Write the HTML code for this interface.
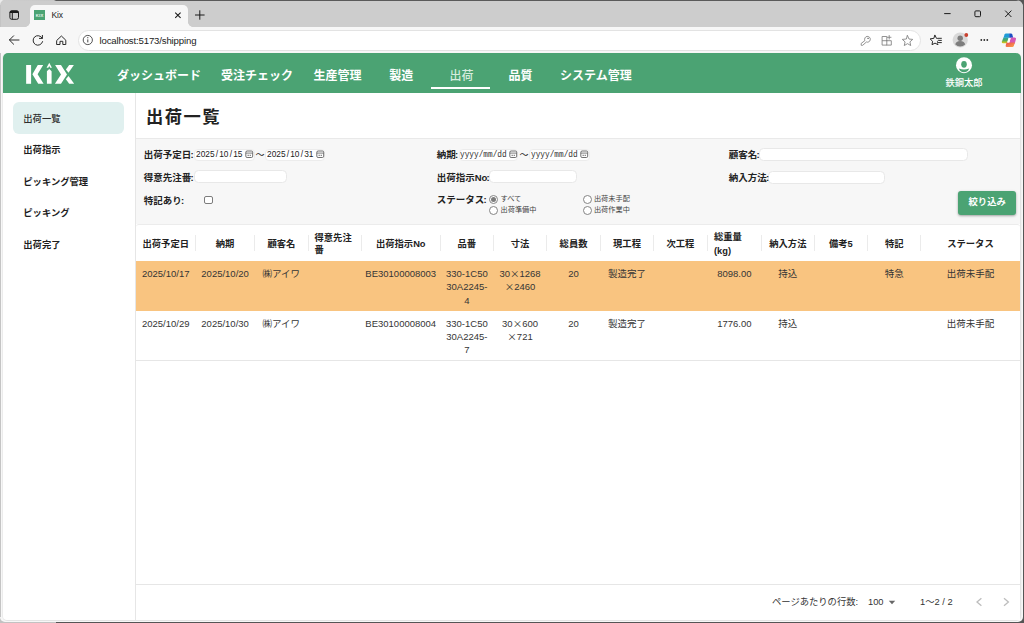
<!DOCTYPE html>
<html lang="ja">
<head>
<meta charset="utf-8">
<title>Kix</title>
<style>
*{box-sizing:border-box;margin:0;padding:0}
html,body{width:1024px;height:623px;overflow:hidden;background:#555}
body{font-family:"Liberation Sans","Noto Sans CJK JP",sans-serif;color:#222;position:relative}
.abs{position:absolute}
#win{position:absolute;left:0;top:0;width:1023px;height:621.600px;background:#f7f7f7;border-radius:5px 7px 5px 5px;overflow:hidden}
#tabbar{position:absolute;left:0;top:0;width:1023px;height:27px;background:#cdcdcd}
#tab{position:absolute;left:30px;top:5px;width:158px;height:22px;background:#f7f7f7;border-radius:5px 5px 0 0}
#topline{position:absolute;left:0;top:0;width:1023px;height:.9px;background:linear-gradient(90deg,#cdcdcd 0,#c8c8c8 54px,#5a5a5a 56px)}
#leftline{position:absolute;left:0;top:5px;width:.9px;height:612px;background:#c4c4c4}
#toolbar{position:absolute;left:0;top:27px;width:1023px;height:26px;background:#f7f7f7}
#url{position:absolute;left:78px;top:30px;width:842.5px;height:21px;border-radius:11px;background:#fff;border:1px solid #e3e3e3}
.chrome-t{font-family:"Liberation Sans",sans-serif;color:#222}
#content{position:absolute;left:2.200px;top:53px;width:1019.300px;height:567.500px;background:#fff;border-radius:5px;border:1px solid #e4e4e4;box-shadow:1px 0 0 #f1f1f1;border-left:1.800px solid #ececec;border-top:none}
#hdr{position:absolute;left:3.400px;top:53.400px;width:1017.600px;height:39.300px;background:#4ba373;border-radius:5px 5px 0 0}
.nav{position:absolute;top:68px;color:#fff;font-weight:700;font-size:12px;line-height:17px;white-space:nowrap}
.sitem{position:absolute;left:23.300px;font-size:9.300px;font-weight:700;color:#222;line-height:14px;white-space:nowrap}
#sel{position:absolute;left:12.800px;top:102.100px;width:111.400px;height:31.700px;border-radius:6px;background:#e0f0ef}
h1{position:absolute;left:145.900px;top:103.500px;font-size:17.300px;letter-spacing:1.500px;line-height:27px;font-weight:700;color:#222;white-space:nowrap}
#filter{position:absolute;left:136px;top:138px;width:884px;height:85.500px;background:#f7f7f7;border-top:1px solid #e9e9e9}
.fl{z-index:2;position:absolute;font-size:9.500px;font-weight:700;line-height:14px;color:#222;white-space:nowrap}
.fl i{font-style:normal;margin:0 -1px 0 -.8px}
.inp{position:absolute;background:#fff;border:1.200px solid #e8e8e8;border-radius:4.500px}
.dinp{position:absolute;background:#fff;border:1px solid #ececec;border-radius:4px;white-space:nowrap}
.dt{position:absolute;left:.4px;top:-1.700px;font-family:"Liberation Sans","Noto Sans CJK JP",sans-serif;font-size:9.800px;line-height:11.800px;transform:scaleX(.85);transform-origin:0 50%;display:block}
.dt b{font-weight:400;margin:0 1.400px}
.dm{position:absolute;left:.4px;top:-.7px;font-family:"Liberation Mono","Noto Sans CJK JP",monospace;font-size:9.600px;line-height:11.600px;transform:scaleX(.81);transform-origin:0 50%;display:block}
.cal{position:absolute;right:-.2px;top:-.2px;overflow:visible}
.til{top:148px;font-size:9px;line-height:14px;color:#222}
.rl{position:absolute;font-size:7.200px;line-height:10px;color:#444;white-space:nowrap}
.rad{position:absolute;width:9px;height:9px;border:.9px solid #858585;margin:-.4px 0 0 -.4px;border-radius:50%;background:#fff}
.rad i{position:absolute;left:1.100px;top:1.100px;width:5px;height:5px;border-radius:50%;background:#7c7c7c}
#btn{position:absolute;left:958px;top:191px;width:58.300px;height:23.700px;border-radius:3px;background:#4ba373;color:#fff;font-weight:700;font-size:9.300px;line-height:23.700px;text-align:center;box-shadow:0 1px 2.500px rgba(0,0,0,.35)}
#tbl{position:absolute;left:136px;top:223.500px;width:884px;height:396px;background:#fff;border-top:1px solid #ececec;border-radius:3px 3px 0 0}
.th{position:absolute;font-size:9.300px;font-weight:700;line-height:12px;color:#222;white-space:nowrap}
.c{text-align:center}
.sep{position:absolute;top:235.200px;width:1px;height:15.600px;background:#ebebeb}
.td{position:absolute;font-size:9.500px;line-height:13.200px;color:#353535;white-space:nowrap}
.x{font-family:"Noto Sans CJK JP",sans-serif}
.hl{position:absolute;left:136px;width:884px;height:1px;background:#e6e6e6}
.ft{position:absolute;top:595px;font-size:9.300px;line-height:14px;color:#333;white-space:nowrap}
</style>
</head>
<body>
<div class="abs" style="left:0;top:0;width:12px;height:623px;background:#c6c6c6"></div>
<div class="abs" style="left:0;top:0;width:8px;height:8px;background:#ececec"></div>
<div class="abs" style="left:0;top:612px;width:56px;height:11px;background:#c2c2c2"></div>
<div id="win">
  <div id="tabbar"></div>
  <div id="topline"></div>
  <div id="leftline"></div>
  <div id="tab"></div>
  <div class="abs" style="left:25px;top:22px;width:5px;height:5px;background:radial-gradient(circle at 0 0,#cdcdcd 4.6px,#f7f7f7 5.2px)"></div>
  <div class="abs" style="left:188px;top:22px;width:5px;height:5px;background:radial-gradient(circle at 100% 0,#cdcdcd 4.6px,#f7f7f7 5.2px)"></div>
  <svg class="abs" style="left:8px;top:9px" width="12" height="12" viewBox="0 0 12 12"><rect x="1.9" y="1.9" width="8.6" height="8.4" rx="1.8" fill="none" stroke="#1b1b1b" stroke-width="1"/><path d="M1.6 3.9V3.6a2 2 0 0 1 2-2h5.2a2 2 0 0 1 2 2v.3z" fill="#1b1b1b"/><path d="M4.3 3.5v6.8" stroke="#1b1b1b" stroke-width="1"/></svg>
  <svg class="abs" style="left:34px;top:10px" width="11" height="10" viewBox="0 0 11 10"><rect width="11" height="10" fill="#4ba373"/><text x="5.600" y="6.600" text-anchor="middle" font-family="Liberation Sans, sans-serif" font-weight="700" font-size="4.200" fill="#e8f5ee" letter-spacing=".2">KIX</text></svg>
  <div class="abs chrome-t" style="left:51.5px;top:9px;font-size:8.5px;line-height:12px;letter-spacing:-.2px">Kix</div>
  <svg class="abs" style="left:174px;top:11px" width="8" height="8" viewBox="0 0 8 8"><path d="M1.2 1.6l5.4 5.2M6.6 1.6L1.2 6.8" stroke="#1b1b1b" stroke-width="1.1" fill="none"/></svg>
  <svg class="abs" style="left:194px;top:9px" width="12" height="12" viewBox="0 0 12 12"><path d="M1 6h9.6M5.8 1.3v9.4" stroke="#1b1b1b" stroke-width="1" fill="none"/></svg>
  <svg class="abs" style="left:940px;top:8px" width="76" height="12" viewBox="0 0 76 12"><path d="M4.2 5.6h6.4" stroke="#1b1b1b" stroke-width="1"/><rect x="34.9" y="2.9" width="5.6" height="5.8" rx="1" fill="none" stroke="#1b1b1b" stroke-width="1"/><path d="M65.2 2.6l6.2 6.4M71.4 2.6l-6.2 6.4" stroke="#1b1b1b" stroke-width="1" fill="none"/></svg>
  <div id="toolbar"></div>
  <div id="url"></div>
  <svg class="abs" style="left:7px;top:33px" width="64" height="14" viewBox="0 0 64 14"><g fill="none" stroke="#2a2a2a" stroke-width="1" stroke-linecap="round" stroke-linejoin="round"><path d="M12 7H2.6M6.6 2.8L2.4 7l4.2 4.2"/><path d="M35.2 5.2A4.8 4.8 0 1 0 35.6 8.6M35.4 2.4v3h-3"/><path d="M50 7.2L54.4 3l4.4 4.2v4.3h-3V8.300h-2.800v3.2h-3z"/></g></svg>
  <svg class="abs" style="left:82px;top:34px" width="12" height="12" viewBox="0 0 12 12"><circle cx="5.8" cy="6" r="4.6" fill="none" stroke="#444" stroke-width=".9"/><path d="M5.800 5.400v3" stroke="#444" stroke-width="1"/><circle cx="5.800" cy="3.700" r=".6" fill="#444"/></svg>
  <div class="abs chrome-t" style="left:99.500px;top:33.500px;font-size:9.6px;line-height:13px;letter-spacing:-.15px;white-space:nowrap">localhost:5173/shipping</div>
  <svg class="abs" style="left:858px;top:32.800px" width="60" height="14" viewBox="0 0 60 14"><g fill="none" stroke="#808080" stroke-width=".85" stroke-linejoin="round" stroke-linecap="round"><path d="M6.700 7.300a2.900 2.900 0 1 1 1.700 1.700L4.700 12.300H3.200V10.800z"/><circle cx="10" cy="5.300" r=".4"/><path d="M24.500 3.500h4.300v8.600h-4.300zM28.800 7.700h4.500v4.400h-4.500M31.200 2.500v3.600M29.400 4.300h3.600M24.500 7.700h4.300"/><path d="M49.500 2.600L51 6.040L54.730 6.400L51.930 8.890L52.730 12.550L49.500 10.650L46.270 12.550L47.070 8.890L44.270 6.400L48 6.040z"/></g></svg>
  <svg class="abs" style="left:928px;top:32px" width="92" height="16" viewBox="0 0 92 16"><g fill="none" stroke="#2a2a2a" stroke-width="1" stroke-linejoin="round" stroke-linecap="round"><path d="M7 3.300l1.500 3.100 3.400.5-2.500 2.400.6 3.400-3-1.600-3 1.600.6-3.400-2.500-2.400 3.400-.5z"/><path d="M9.600 6.300h4M10.600 8.400h3M9.800 10.600h3.800" stroke="#f7f7f7" stroke-width="2.600" stroke-linecap="butt"/><path d="M9.800 6.300h3.600M10.800 8.400h2.600M10.200 10.600h3.200"/></g><circle cx="32.200" cy="8" r="7.600" fill="#d9d9d9"/><circle cx="32.200" cy="6.300" r="2.700" fill="#7d7d7d"/><path d="M27.300 12.600a4.900 3.600 0 0 1 9.800 0 7 7 0 0 1-9.800 0z" fill="#7d7d7d"/><circle cx="38.300" cy="3" r="1.900" fill="#c8402f"/><circle cx="53.300" cy="8" r=".9" fill="#2a2a2a"/><circle cx="56.300" cy="8" r=".9" fill="#2a2a2a"/><circle cx="59.300" cy="8" r=".9" fill="#2a2a2a"/></svg>
  <svg class="abs" style="left:1000px;top:32px" width="18" height="16" viewBox="1000 32 18 16"><defs><linearGradient id="cg1" x1="0" y1="0" x2="0" y2="1"><stop offset="0" stop-color="#2aa3a8"/><stop offset=".5" stop-color="#52aa5c"/><stop offset="1" stop-color="#e6c914"/></linearGradient><linearGradient id="cg2" x1="0" y1="0" x2="1" y2="1"><stop offset="0" stop-color="#ee4b50"/><stop offset="1" stop-color="#f8a548"/></linearGradient></defs><path d="M1003.500 37.700L1004.500 34.600Q1004.900 33.600 1006 33.600H1009.200V37.700Z" fill="#1f9bd8"/><path d="M1009.200 33.600H1011Q1012 33.600 1012.300 34.600L1013.200 37.700H1009.200Z" fill="#1d4fc4"/><path d="M1003.500 37.600H1008.600L1006.900 43.200H1003.200Q1001.500 43.200 1001.800 41.700Z" fill="url(#cg1)"/><path d="M1010.800 37.600H1014.600Q1016.400 37.600 1016 39.100L1014.700 43.800H1009.200Z" fill="#d457b5"/><path d="M1006.600 42.600H1014.900L1013.800 46.100Q1013.400 47.100 1012.300 47.100H1007Q1005.300 47.100 1005.700 45.600Z" fill="url(#cg2)"/><path d="M1008.700 38.200H1010.600L1009.200 42.600H1007.300Z" fill="#fff"/></svg>
  <div id="content"></div>
  <div id="hdr"></div>
  <svg class="abs" style="left:20px;top:58px" width="60" height="30" viewBox="20 58 60 30"><g fill="#fff"><rect x="26.150" y="65" width="4.950" height="18.800"/><path d="M37.800 65h5.400L37.600 74.250l6 9.550h-5.400L32.400 74.250z"/><path d="M46.900 83.800V71.200l2.350-2.300 2.350 2.300v12.600z"/><path d="M49.250 62.700l2.700 5.100h-1.750l-.95-1.900-.95 1.900h-1.750z"/><path d="M55.100 65h5.900l6 9.400-6 9.400h-6.100l6.100-9.400z"/><path d="M69.200 65h4.700l-5.400 7.800-2.600-3.300z"/><path d="M69.200 83.800h5l-5.700-7.800-2.600 3.300z"/></g></svg>
  <div class="nav" style="left:117px">ダッシュボード</div>
  <div class="nav" style="left:221px">受注チェック</div>
  <div class="nav" style="left:313.5px">生産管理</div>
  <div class="nav" style="left:389.3px">製造</div>
  <div class="nav" style="left:508.5px">品質</div>
  <div class="nav" style="left:560px">システム管理</div>
  <div class="nav" style="left:449.500px;color:#d6ecdf;font-weight:500">出荷</div>
  <div class="abs" style="left:431.300px;top:87px;width:59.200px;height:1.800px;background:#fff"></div>
  <svg class="abs" style="left:954px;top:55px" width="20" height="20" viewBox="954 55 20 20"><circle cx="964" cy="65.200" r="8" fill="#fff"/><ellipse cx="964" cy="64.300" rx="2.800" ry="3.400" fill="#4ba373"/><path d="M958.800 68.400Q964 70.500 969.200 68.400C968.400 71 966 72.200 964 72.200C962 72.200 959.600 71 958.800 68.400Z" fill="#4ba373"/></svg>
  <div class="abs" style="left:945px;top:76px;width:38px;text-align:center;color:#fff;font-weight:500;font-size:9.300px;line-height:14px;white-space:nowrap">鉄鋼太郎</div>
  <div class="abs" style="left:135px;top:93px;width:1px;height:527px;background:#e6e6e6"></div>
  <div id="sel"></div>
  <div class="sitem" style="top:111.500px;color:#2c2c2c;font-weight:500">出荷一覧</div>
  <div class="sitem" style="top:142.9px;color:#1e1e1e">出荷指示</div>
  <div class="sitem" style="top:175.400px;color:#1e1e1e">ピッキング管理</div>
  <div class="sitem" style="top:205.8px;color:#1e1e1e">ピッキング</div>
  <div class="sitem" style="top:238.400px;color:#1e1e1e">出荷完了</div>
  <h1>出荷一覧</h1>
  <div id="filter"></div>
  <div class="fl" style="left:143.800px;top:148.0px">出荷予定日<i>:</i></div>
  <div class="dinp" style="left:194.2px;top:148.700px;width:60.6px;height:12.100px;color:#222"><span class="dt">2025<b>/</b>10<b>/</b>15</span><svg class="cal" width="9" height="9" viewBox="0 0 9 9"><rect x=".8" y="1" width="6.900" height="6.500" rx="1.300" fill="#fdfdfd" stroke="#606060" stroke-width=".9"/><path d="M.8 3.100h6.900" stroke="#606060" stroke-width=".8"/><path d="M2.500 5.400h1.400M4.600 5.400h1.400" stroke="#8a8a8a" stroke-width="1.100"/></svg></div>
  <div class="abs til" style="left:255.500px">～</div>
  <div class="dinp" style="left:265.3px;top:148.700px;width:60.2px;height:12.100px;color:#222"><span class="dt">2025<b>/</b>10<b>/</b>31</span><svg class="cal" width="9" height="9" viewBox="0 0 9 9"><rect x=".8" y="1" width="6.900" height="6.500" rx="1.300" fill="#fdfdfd" stroke="#606060" stroke-width=".9"/><path d="M.8 3.100h6.900" stroke="#606060" stroke-width=".8"/><path d="M2.500 5.400h1.400M4.600 5.400h1.400" stroke="#8a8a8a" stroke-width="1.100"/></svg></div>
  <div class="fl" style="left:143.800px;top:170.5px">得意先注番<i>:</i></div>
  <div class="inp" style="left:193.5px;top:170.1px;width:93.6px;height:13.1px"></div>
  <div class="fl" style="left:143.800px;top:194.300px">特記あり<i>:</i></div>
  <div class="abs" style="left:204px;top:195.600px;width:8.500px;height:8.500px;border:.9px solid #7c7c7c;border-radius:2px;background:#fff"></div>
  <div class="fl" style="left:436.7px;top:148.0px">納期<i>:</i></div>
  <div class="dinp" style="left:458.6px;top:148.700px;width:59.9px;height:12.100px;color:#303030"><span class="dm">yyyy/mm/dd</span><svg class="cal" width="9" height="9" viewBox="0 0 9 9"><rect x=".8" y="1" width="6.900" height="6.500" rx="1.300" fill="#fdfdfd" stroke="#606060" stroke-width=".9"/><path d="M.8 3.100h6.900" stroke="#606060" stroke-width=".8"/><path d="M2.500 5.400h1.400M4.600 5.400h1.400" stroke="#8a8a8a" stroke-width="1.100"/></svg></div>
  <div class="abs til" style="left:519.500px">～</div>
  <div class="dinp" style="left:529.2px;top:148.700px;width:60.8px;height:12.100px;color:#303030"><span class="dm">yyyy/mm/dd</span><svg class="cal" width="9" height="9" viewBox="0 0 9 9"><rect x=".8" y="1" width="6.900" height="6.500" rx="1.300" fill="#fdfdfd" stroke="#606060" stroke-width=".9"/><path d="M.8 3.100h6.900" stroke="#606060" stroke-width=".8"/><path d="M2.500 5.400h1.400M4.600 5.400h1.400" stroke="#8a8a8a" stroke-width="1.100"/></svg></div>
  <div class="fl" style="left:436.7px;top:170.5px">出荷指示No<i>:</i></div>
  <div class="inp" style="left:489.0px;top:169.9px;width:88.4px;height:13.4px"></div>
  <div class="fl" style="left:436.7px;top:193.2px">ステータス<i>:</i></div>
  <div class="rad" style="left:489.5px;top:195.3px"><i></i></div>
  <div class="rl" style="left:500.5px;top:194.2px">すべて</div>
  <div class="rad" style="left:489.5px;top:206.0px"></div>
  <div class="rl" style="left:500.5px;top:204.9px">出荷準備中</div>
  <div class="rad" style="left:582.9px;top:195.3px"></div>
  <div class="rl" style="left:593.9px;top:194.2px">出荷未手配</div>
  <div class="rad" style="left:582.9px;top:206.0px"></div>
  <div class="rl" style="left:593.9px;top:204.9px">出荷作業中</div>
  <div class="fl" style="left:728.7px;top:148.3px">顧客名<i>:</i></div>
  <div class="inp" style="left:759.3px;top:147.8px;width:208.4px;height:13.2px"></div>
  <div class="fl" style="left:728.7px;top:171.2px">納入方法<i>:</i></div>
  <div class="inp" style="left:768.3px;top:170.9px;width:116.3px;height:13.3px"></div>
  <div id="btn">絞り込み</div>
  <div id="tbl"></div>
  <div class="sep" style="left:195.0px"></div>
  <div class="sep" style="left:254.2px"></div>
  <div class="sep" style="left:307.5px"></div>
  <div class="sep" style="left:360.5px"></div>
  <div class="sep" style="left:440.0px"></div>
  <div class="sep" style="left:492.7px"></div>
  <div class="sep" style="left:546.4px"></div>
  <div class="sep" style="left:599.7px"></div>
  <div class="sep" style="left:653.3px"></div>
  <div class="sep" style="left:706.6px"></div>
  <div class="sep" style="left:761.2px"></div>
  <div class="sep" style="left:813.5px"></div>
  <div class="sep" style="left:867.2px"></div>
  <div class="sep" style="left:920.4px"></div>
  <div class="th c" style="left:136.0px;width:59.5px;top:238.200px">出荷予定日</div>
  <div class="th c" style="left:195.5px;width:59.2px;top:238.200px">納期</div>
  <div class="th c" style="left:254.7px;width:53.3px;top:238.200px">顧客名</div>
  <div class="th c" style="left:361.0px;width:79.5px;top:238.200px">出荷指示No</div>
  <div class="th c" style="left:440.5px;width:52.7px;top:238.200px">品番</div>
  <div class="th c" style="left:493.2px;width:53.7px;top:238.200px">寸法</div>
  <div class="th c" style="left:546.9px;width:53.3px;top:238.200px">総員数</div>
  <div class="th c" style="left:600.2px;width:53.6px;top:238.200px">現工程</div>
  <div class="th c" style="left:653.8px;width:53.3px;top:238.200px">次工程</div>
  <div class="th c" style="left:761.7px;width:52.3px;top:238.200px">納入方法</div>
  <div class="th c" style="left:814.0px;width:53.7px;top:238.200px">備考5</div>
  <div class="th c" style="left:867.7px;width:53.2px;top:238.200px">特記</div>
  <div class="th c" style="left:920.9px;width:99.1px;top:238.200px">ステータス</div>
  <div class="th" style="left:314.500px;top:231.600px">得意先注</div>
  <div class="th" style="left:314.500px;top:243.900px">番</div>
  <div class="th" style="left:714px;top:230.500px">総重量</div>
  <div class="th" style="left:714px;top:244.700px">(kg)</div>
  <div class="abs" style="left:136px;top:261px;width:884px;height:49.700px;background:#f9c480"></div>
  <div class="hl" style="top:359.700px"></div>
  <div class="hl" style="top:583.700px"></div>
  <div class="td c" style="left:136.0px;width:59.5px;top:267.200px">2025/10/17</div>
  <div class="td c" style="left:195.5px;width:59.2px;top:267.200px">2025/10/20</div>
  <div class="td c" style="left:254.7px;width:53.3px;top:267.200px">㈱アイワ</div>
  <div class="td c" style="left:361.0px;width:79.5px;top:267.200px">BE30100008003</div>
  <div class="td c" style="left:440.5px;width:52.7px;top:267.200px">330-1C50<br>30A2245-<br>4</div>
  <div class="td c" style="left:493.2px;width:53.7px;top:267.200px">30<span class="x">×</span>1268<br><span class="x">×</span>2460</div>
  <div class="td c" style="left:546.9px;width:53.3px;top:267.200px">20</div>
  <div class="td c" style="left:600.2px;width:53.6px;top:267.200px">製造完了</div>
  <div class="td c" style="left:707.1px;width:54.6px;top:267.200px">8098.00</div>
  <div class="td c" style="left:761.7px;width:52.3px;top:267.200px">持込</div>
  <div class="td c" style="left:867.7px;width:53.2px;top:267.200px">特急</div>
  <div class="td c" style="left:920.9px;width:99.1px;top:267.200px">出荷未手配</div>
  <div class="td c" style="left:136.0px;width:59.5px;top:316.600px">2025/10/29</div>
  <div class="td c" style="left:195.5px;width:59.2px;top:316.600px">2025/10/30</div>
  <div class="td c" style="left:254.7px;width:53.3px;top:316.600px">㈱アイワ</div>
  <div class="td c" style="left:361.0px;width:79.5px;top:316.600px">BE30100008004</div>
  <div class="td c" style="left:440.5px;width:52.7px;top:316.600px">330-1C50<br>30A2245-<br>7</div>
  <div class="td c" style="left:493.2px;width:53.7px;top:316.600px">30<span class="x">×</span>600<br><span class="x">×</span>721</div>
  <div class="td c" style="left:546.9px;width:53.3px;top:316.600px">20</div>
  <div class="td c" style="left:600.2px;width:53.6px;top:316.600px">製造完了</div>
  <div class="td c" style="left:707.1px;width:54.6px;top:316.600px">1776.00</div>
  <div class="td c" style="left:761.7px;width:52.3px;top:316.600px">持込</div>
  <div class="td c" style="left:920.9px;width:99.1px;top:316.600px">出荷未手配</div>
  <div class="ft" style="left:772px">ページあたりの行数:</div>
  <div class="ft" style="left:868px">100</div>
  <svg class="abs" style="left:887.500px;top:600px" width="8" height="5" viewBox="0 0 8 5"><path d="M.8.700h6.400L4 4.200z" fill="#666"/></svg>
  <div class="ft" style="left:920px">1～2 / 2</div>
  <svg class="abs" style="left:974px;top:596px" width="38" height="12" viewBox="0 0 38 12"><path d="M7.400 2.200L3 6l4.400 3.800M30 2.200L34.400 6l-4.400 3.800" fill="none" stroke="#bdbdbd" stroke-width="1.300"/></svg>
</div>
</body>
</html>
